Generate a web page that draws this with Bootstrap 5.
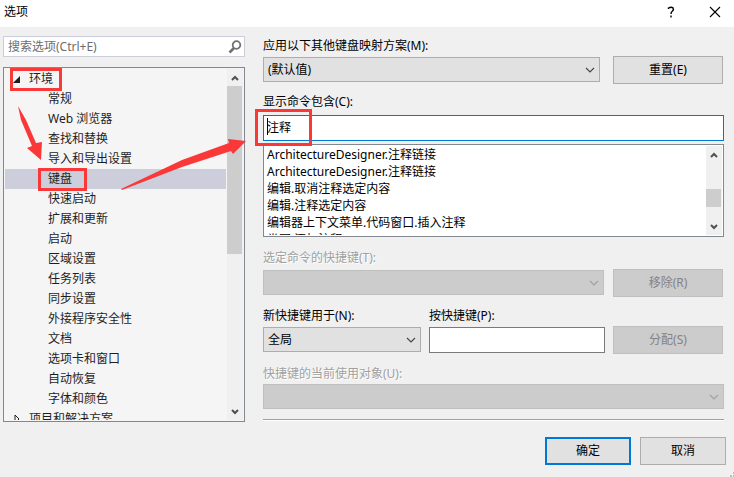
<!DOCTYPE html>
<html lang="zh-CN">
<head>
<meta charset="utf-8">
<meta name="viewport" content="width=device-width, initial-scale=1">
<title>选项</title>
<link href="https://cdn.jsdelivr.net/npm/bootstrap@5.3.0/dist/css/bootstrap.min.css" rel="stylesheet">
<script src="https://cdn.jsdelivr.net/npm/bootstrap@5.3.0/dist/js/bootstrap.bundle.min.js" defer></script>
<style>
body { font: 12px/20px "Noto Sans", "Noto Sans CJK SC", sans-serif; color: #000; background: #f0f0f0; }
.title-bar { height: 27px; background: #fff; padding: 0 13px 4px 4px; gap: 32px; }
.plain-btn { border: 0; background: none; padding: 0; color: inherit; line-height: 20px; }
.dialog-body { padding: 9px 10px 0 3px; gap: 18px; }
.side-pane { flex: 0 0 242px; }
.search-box { height: 21px; background: #fff; border: 1px solid #cccedb; padding: 0 2px 0 4px; }
.search-box input { border: 0; outline: 0; padding: 0; background: none; color: #6d6d6d; min-width: 0; }
.search-box input::placeholder { color: #6d6d6d; opacity: 1; }
.tree-box { height: 355px; margin-top: 10px; background: #f5f5f5; border: 1px solid #828790; padding: 1px; overflow: hidden; }
.tree-list { overflow: hidden; }
.tree-list ul { padding: 0; margin: 0; list-style: none; }
.tree-list a { display: flex; align-items: center; height: 20px; color: #1e1e1e; text-decoration: none; padding-left: 43px; }
.tree-list a.branch { padding-left: 8px; gap: 9px; }
.tree-list a.branch svg { flex: 0 0 7px; }
.tree-list a.active { background: #cccedb; }
.scroll-track { flex: 0 0 16px; margin-left: 1px; background: #f0f0f0; display: flex; flex-direction: column; }
.scroll-track button { height: 17px; flex: none; display: flex; justify-content: center; align-items: center; }
.scroll-thumb { background: #cdcdcd; margin-right: 1px; }
.tree-thumb { height: 168px; }
.list-thumb { height: 18px; margin-top: 26px; }
.main-pane { min-width: 0; }
.main-pane label { display: block; height: 20px; }
.main-pane label.dim { color: #a0a0a0; text-shadow: 1px 1px #fff; }
.ctl { height: 25px; font-size: 12px; line-height: 20px; border: 1px solid #adadad; border-radius: 0; color: #000; padding: 0 24px 0 4px; }
select.ctl { background-color: #e1e1e1; background-position: right 4px center; background-size: 10px 6px;
  background-image: url("data:image/svg+xml,%3Csvg xmlns='http://www.w3.org/2000/svg' viewBox='0 0 10 6'%3E%3Cpath d='M1 1l4 4 4-4' fill='none' stroke='%23444' stroke-width='1.1'/%3E%3C/svg%3E"); }
select.ctl:disabled { background-color: #ccc; border-color: #bfbfbf;
  background-image: url("data:image/svg+xml,%3Csvg xmlns='http://www.w3.org/2000/svg' viewBox='0 0 10 6'%3E%3Cpath d='M1 1l4 4 4-4' fill='none' stroke='%23a0a0a0' stroke-width='1.1'/%3E%3C/svg%3E"); }
input.ctl { height: 26px; background: #fff; border-color: #7a7a7a; padding: 0 3px 2px; }
input.ctl.current { border-color: #0078d7; box-shadow: none; }
.push { height: 28px; width: 110px; font-size: 12px; line-height: 20px; padding: 0; border: 1px solid #adadad; border-radius: 0; background: #e1e1e1; color: #000; }
.push:disabled { background: #ccc; border-color: #bfbfbf; color: #838383; opacity: 1; }
.push.ok, .push.cancel { width: 86px; }
.push.ok { border: 2px solid #0078d7; }
.scheme-row { display: grid; grid-template-columns: minmax(0, 1fr) 110px; column-gap: 13px; margin-bottom: 8px; padding-right: 1px; }
.bound-row { display: grid; grid-template-columns: minmax(0, 1fr) 110px; column-gap: 9px; margin: 1px 0 9px; padding-right: 1px; }
.scheme-row .ctl, .bound-row .ctl, .key-row .ctl { margin-top: 1px; }
.filter-box { margin-top: 3px; }
.cmd-list { height: 93px; margin: 3px 0 11px; background: #fff; border: 1px solid #828790; padding: 1px; }
.cmd-list ul { list-style: none; margin: 0; padding: 0 0 0 2px; overflow: hidden; line-height: 17px; }
.key-row { display: grid; grid-template-columns: 158px minmax(0, 1fr) 110px; column-gap: 8px; padding-right: 1px; margin-bottom: 10px; }
.key-row > button { margin-top: 20px; }
.rule { border-top: 1px solid #a0a0a0; border-bottom: 1px solid #fff; margin-top: 10px; }
.foot { gap: 9px; padding: 15px 8px 12px 0; }
.caret-line { width: 1px; height: 17px; left: 4px; top: 3px; background: #000; }
.marks { left: 0; top: 0; pointer-events: none; }
.grip { right: 0; bottom: 0; }
</style>
</head>
<body class="position-relative">
<header class="title-bar d-flex align-items-center">
  <span class="me-auto">选项</span>
  <button class="plain-btn d-flex" aria-label="帮助"><svg width="12" height="14" viewBox="0 0 12 14" fill="none" stroke="#000" stroke-width="1.4"><path d="M3.500 4V3Q6 1.500 8 2.800Q9 4.500 7.500 6Q6 7 6 9"/><path d="M6 10.500v2"/></svg></button>
  <button class="plain-btn d-flex" aria-label="关闭"><svg width="12" height="12" viewBox="0 0 12 12"><path d="M1 1l10 10M11 1L1 11" stroke="#000" stroke-width="1.1"/></svg></button>
</header>
<main class="dialog-body d-flex">
  <section class="side-pane">
    <div class="search-box d-flex align-items-center">
      <input class="flex-grow-1" type="text" placeholder="搜索选项(Ctrl+E)" aria-label="搜索选项">
      <button class="plain-btn d-flex" aria-label="搜索"><svg width="14" height="14" viewBox="0 0 14 14" fill="none" stroke="#717171"><circle cx="8.500" cy="5" r="3.800" stroke-width="1.800"/><path d="M6 8L1.500 12.500" stroke-width="2.600"/></svg></button>
    </div>
    <nav class="tree-box d-flex" aria-label="选项类别">
      <div class="tree-list flex-grow-1">
        <ul>
          <li><a class="branch" href="#"><svg width="7" height="7" viewBox="0 0 7 7"><path d="M7 0v7H0z" fill="#1e1e1e"/></svg>环境</a>
            <ul>
              <li><a href="#">常规</a></li>
              <li><a href="#">Web 浏览器</a></li>
              <li><a href="#">查找和替换</a></li>
              <li><a href="#">导入和导出设置</a></li>
              <li><a class="active" href="#">键盘</a></li>
              <li><a href="#">快速启动</a></li>
              <li><a href="#">扩展和更新</a></li>
              <li><a href="#">启动</a></li>
              <li><a href="#">区域设置</a></li>
              <li><a href="#">任务列表</a></li>
              <li><a href="#">同步设置</a></li>
              <li><a href="#">外接程序安全性</a></li>
              <li><a href="#">文档</a></li>
              <li><a href="#">选项卡和窗口</a></li>
              <li><a href="#">自动恢复</a></li>
              <li><a href="#">字体和颜色</a></li>
            </ul>
          </li>
          <li><a class="branch" href="#"><svg width="7" height="10" viewBox="0 0 7 10"><path d="M2 1l4 4-4 4z" fill="none" stroke="#1e1e1e"/></svg>项目和解决方案</a></li>
        </ul>
      </div>
      <div class="scroll-track">
        <button class="plain-btn" aria-label="向上"><svg width="8" height="6" viewBox="0 0 8 6"><path d="M1 5l3-3 3 3" fill="none" stroke="#505050" stroke-width="2"/></svg></button>
        <div class="scroll-thumb tree-thumb"></div>
        <button class="plain-btn mt-auto" aria-label="向下"><svg width="8" height="6" viewBox="0 0 8 6"><path d="M1 1l3 3 3-3" fill="none" stroke="#505050" stroke-width="2"/></svg></button>
      </div>
    </nav>
  </section>
  <section class="main-pane flex-grow-1">
    <label for="scheme">应用以下其他键盘映射方案(M):</label>
    <div class="scheme-row">
      <select id="scheme" class="form-select ctl"><option>(默认值)</option></select>
      <button class="btn push">重置(E)</button>
    </div>
    <label for="filter">显示命令包含(C):</label>
    <div class="filter-box position-relative">
      <input id="filter" class="form-control ctl current" type="text" value="注释">
      <span class="caret-line position-absolute"></span>
    </div>
    <div class="cmd-list d-flex">
      <ul class="flex-grow-1" role="listbox" aria-label="命令">
        <li role="option">ArchitectureDesigner.注释链接</li>
        <li role="option">ArchitectureDesigner.注释链接</li>
        <li role="option">编辑.取消注释选定内容</li>
        <li role="option">编辑.注释选定内容</li>
        <li role="option">编辑器上下文菜单.代码窗口.插入注释</li>
        <li role="option">类图.添加注释</li>
      </ul>
      <div class="scroll-track">
        <button class="plain-btn" aria-label="向上"><svg width="8" height="6" viewBox="0 0 8 6"><path d="M1 5l3-3 3 3" fill="none" stroke="#505050" stroke-width="2"/></svg></button>
        <div class="scroll-thumb list-thumb"></div>
        <button class="plain-btn mt-auto" aria-label="向下"><svg width="8" height="6" viewBox="0 0 8 6"><path d="M1 1l3 3 3-3" fill="none" stroke="#505050" stroke-width="2"/></svg></button>
      </div>
    </div>
    <label class="dim" for="bound">选定命令的快捷键(T):</label>
    <div class="bound-row">
      <select id="bound" class="form-select ctl" disabled></select>
      <button class="btn push" disabled>移除(R)</button>
    </div>
    <div class="key-row">
      <div>
        <label for="scope">新快捷键用于(N):</label>
        <select id="scope" class="form-select ctl"><option>全局</option></select>
      </div>
      <div>
        <label for="keys">按快捷键(P):</label>
        <input id="keys" class="form-control ctl" type="text">
      </div>
      <button class="btn push" disabled>分配(S)</button>
    </div>
    <label class="dim" for="used">快捷键的当前使用对象(U):</label>
    <select id="used" class="form-select ctl" disabled></select>
    <div class="rule"></div>
  </section>
</main>
<footer class="foot d-flex justify-content-end">
  <button class="btn push ok">确定</button>
  <button class="btn push cancel">取消</button>
</footer>
<svg class="grip position-absolute" width="4" height="5" viewBox="0 0 4 5" fill="#bfbfbf" aria-hidden="true"><path d="M3 0h1v2H3zM0 3h2v2H0zM3 3h1v2H3z"/></svg>
<svg class="marks position-absolute" width="320" height="200" viewBox="0 0 320 200" aria-hidden="true">
  <g fill="none" stroke="#fb3838" stroke-width="3">
    <rect x="11.500" y="69.500" width="49" height="20"/>
    <rect x="39.500" y="169.500" width="46" height="20"/>
    <rect x="256.500" y="110.500" width="54" height="34"/>
  </g>
  <g fill="#fb3838">
    <path d="M18 106L26 120L36 143L42 142L41 160L27 148L32 146L21 120Z"/>
    <path d="M121 189L182 160L229 143L228 139L246 141L233 154L231 151L182 167L122 190Z"/>
  </g>
</svg>
</body>
</html>
